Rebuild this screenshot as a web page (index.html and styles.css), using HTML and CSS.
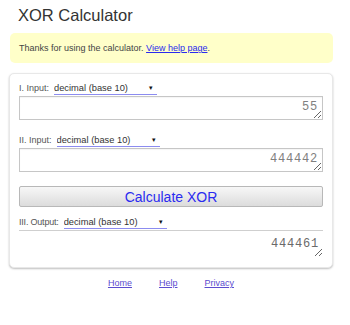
FILE: index.html
```html
<!DOCTYPE html>
<html>
<head>
<title>XOR Calculator</title>
<link rel="stylesheet" href="styles.css">
</head>
<body>
<div class="page">
  <h1 class="title">XOR Calculator</h1>
  <div class="notice">Thanks for using the calculator. <a href="#" class="helplink">View help page</a>.</div>

  <form class="card">
    <div class="row">
      <label class="lbl" for="in1">I. Input:</label>
      <span class="base">
        <select class="basesel">
          <option>decimal (base 10)</option>
        </select>
        <span class="arrow">&#9662;</span>
      </span>
    </div>
    <textarea class="num" id="in1">55</textarea>

    <div class="row second">
      <label class="lbl" for="in2">II. Input:</label>
      <span class="base">
        <select class="basesel">
          <option>decimal (base 10)</option>
        </select>
        <span class="arrow">&#9662;</span>
      </span>
    </div>
    <textarea class="num" id="in2">444442</textarea>

    <button type="button" class="calcbtn">Calculate XOR</button>

    <div class="row outrow">
      <label class="lbl" for="out">III. Output:</label>
      <span class="base">
        <select class="basesel">
          <option>decimal (base 10)</option>
        </select>
        <span class="arrow">&#9662;</span>
      </span>
    </div>
    <textarea class="num result" id="out" readonly>444461</textarea>
  </form>

  <div class="footer">
    <a href="#">Home</a>
    <a href="#">Help</a>
    <a href="#">Privacy</a>
  </div>
</div>
</body>
</html>
```

FILE: styles.css
```css
body {
  margin: 0;
  background: #fff;
  font-family: "Liberation Sans", Arial, sans-serif;
  color: #333;
}

.page {
  width: 324px;
  margin-left: 9px;
}

.title {
  margin: 0 0 0 9px;
  padding-top: 5px;
  font-size: 16.5px;
  line-height: 20px;
  font-weight: normal;
  color: #333;
}

.notice {
  margin: 8px 0 0 1px;
  height: 30px;
  line-height: 30px;
  padding: 0 9px;
  font-size: 9px;
  color: #444;
  background: #ffffc9;
  border-radius: 5px;
}

.helplink {
  color: #2a2aee;
}

.card {
  display: flex;
  flex-direction: column;
  margin-top: 10px;
  padding: 8px 9px 10px 9px;
  border: 1px solid #e8e8e8;
  border-radius: 5px;
  box-shadow: 0 1px 2px rgba(0, 0, 0, 0.25);
  background: #fff;
}

.row {
  display: flex;
  align-items: center;
  gap: 5px;
  height: 12px;
  margin-bottom: 2px;
}

.second {
  margin-top: 14px;
}

.outrow {
  margin-top: 9px;
}

.lbl {
  font-size: 9px;
  color: #555;
}

.outrow .lbl {
  letter-spacing: -0.2px;
}

.base {
  display: flex;
  align-items: center;
  width: 103px;
  height: 12px;
  border-bottom: 1px solid #8c8cf0;
}

.basesel {
  -webkit-appearance: none;
  appearance: none;
  flex: 1;
  border: none;
  background: transparent;
  padding: 0;
  margin: 0;
  font-family: "Liberation Sans", Arial, sans-serif;
  font-size: 9.3px;
  color: #333;
  outline: none;
}

.arrow {
  font-size: 7px;
  color: #111;
  margin-right: 4px;
}

.num {
  box-sizing: border-box;
  width: 100%;
  height: 24px;
  margin: 0;
  padding: 2px 4px 0 4px;
  border: 1px solid #c6c6c6;
  box-shadow: inset 0 1px 1px rgba(0, 0, 0, 0.04);
  text-align: right;
  font-family: "Liberation Mono", "Courier New", monospace;
  font-size: 12px;
  line-height: 16px;
  color: #808080;
  letter-spacing: 0.8px;
}

.result {
  height: 27px;
  margin-top: 0;
  padding-top: 5px;
  border: none;
  border-top: 1px solid #cfcfcf;
  box-shadow: none;
  color: #6a6a6a;
}

.calcbtn {
  margin-top: 14px;
  height: 21px;
  padding: 0;
  border: 1px solid #b8b8b8;
  border-radius: 2px;
  background: linear-gradient(#f7f7f7, #dcdcdc);
  font-family: "Liberation Sans", Arial, sans-serif;
  font-size: 14px;
  color: #2b2bf0;
}

.footer {
  display: flex;
  justify-content: center;
  gap: 27px;
  margin-top: 10px;
  font-size: 9px;
}

.footer a {
  color: #5b4ccf;
}
```
